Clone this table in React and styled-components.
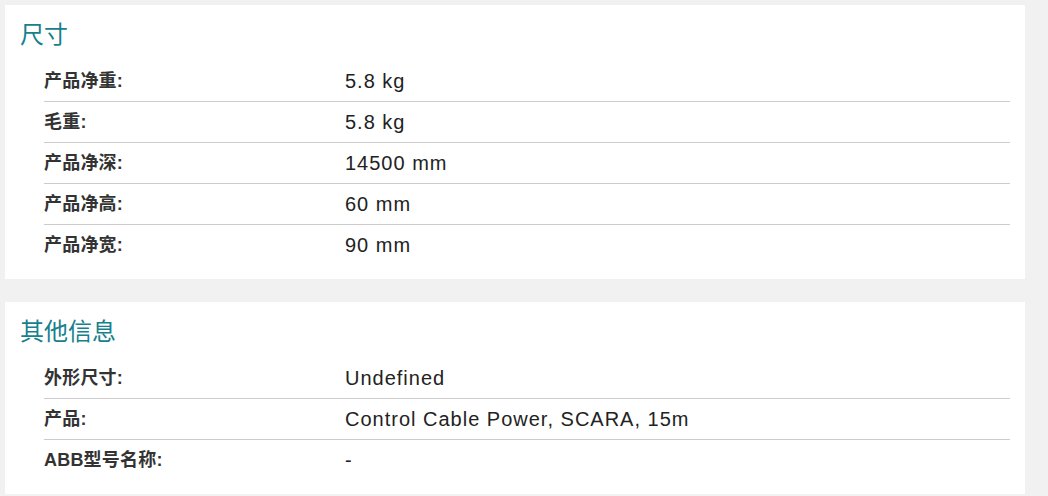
import React from 'react';
import styled, { createGlobalStyle } from 'styled-components';

const GlobalStyle = createGlobalStyle`
  body {
    margin: 0;
    background: #f1f1f1;
    font-family: "Liberation Sans", Arial, "Noto Sans CJK SC", sans-serif;
  }
`;

const Page = styled.div`
  padding: 5px;
  display: flex;
  flex-direction: column;
  gap: 23px;
`;

const Card = styled.section`
  width: 1020px;
  box-sizing: border-box;
  background: #fff;
  padding: 11px 15px 14px 15px;
`;

const Title = styled.h2`
  margin: 0 0 11px 0;
  font-family: "Noto Sans CJK SC", sans-serif;
  font-weight: 400;
  font-size: 24px;
  line-height: 34px;
  color: #177f8d;
`;

const Rows = styled.div`
  margin-left: 24px;
  display: flex;
  flex-direction: column;
`;

const Row = styled.div`
  display: grid;
  grid-template-columns: 301px 1fr;
  align-items: center;
  height: 40px;
  border-bottom: 1px solid #cccccc;
  &:last-child {
    border-bottom: none;
  }
`;

const Label = styled.div`
  font-family: "Liberation Sans", Arial, "Noto Sans CJK SC", sans-serif;
  font-weight: 700;
  font-size: 18px;
  line-height: 20px;
  letter-spacing: 0.2px;
  color: #333;
  margin-bottom: 1px;
`;

const Value = styled.div`
  font-size: 20px;
  line-height: 24px;
  letter-spacing: 1px;
  color: #222;
`;

const sections = [
  {
    title: '尺寸',
    rows: [
      ['产品净重:', '5.8 kg'],
      ['毛重:', '5.8 kg'],
      ['产品净深:', '14500 mm'],
      ['产品净高:', '60 mm'],
      ['产品净宽:', '90 mm'],
    ],
  },
  {
    title: '其他信息',
    rows: [
      ['外形尺寸:', 'Undefined'],
      ['产品:', 'Control Cable Power, SCARA, 15m'],
      ['ABB型号名称:', '-'],
    ],
  },
];

export default function App() {
  return (
    <>
      <GlobalStyle />
      <Page>
        {sections.map((s) => (
          <Card key={s.title}>
            <Title>{s.title}</Title>
            <Rows>
              {s.rows.map(([k, v]) => (
                <Row key={k}>
                  <Label>{k}</Label>
                  <Value>{v}</Value>
                </Row>
              ))}
            </Rows>
          </Card>
        ))}
      </Page>
    </>
  );
}
